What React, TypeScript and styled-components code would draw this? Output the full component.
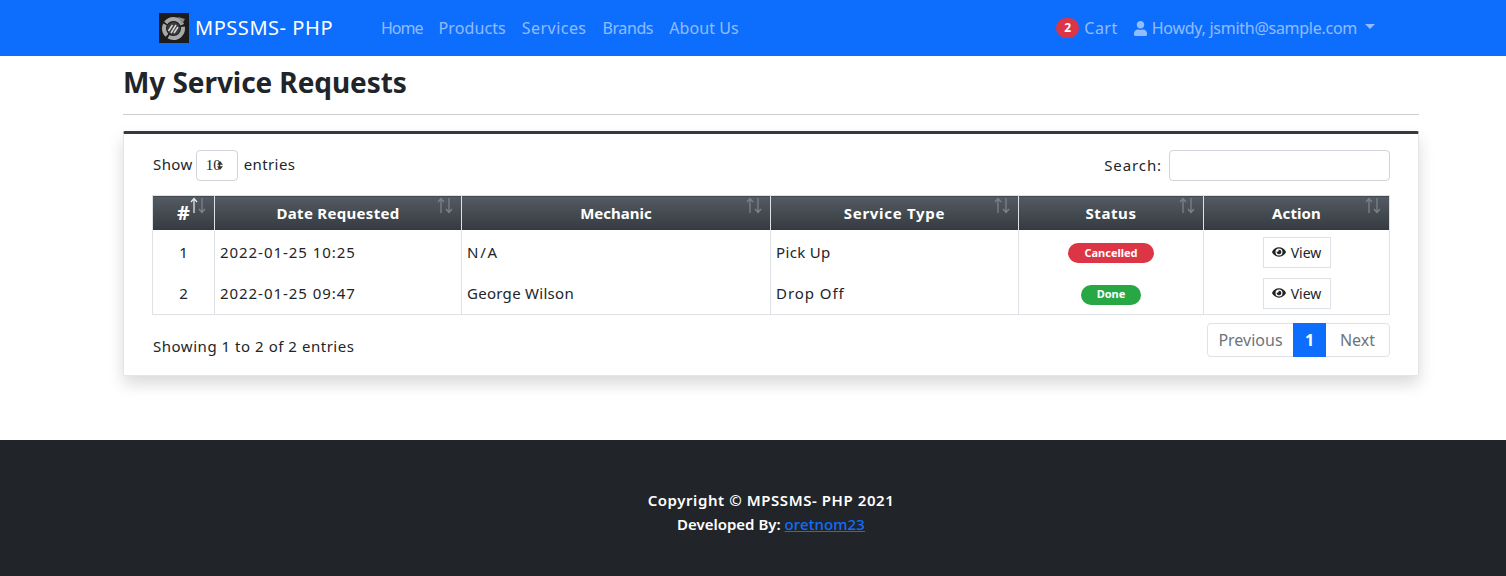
import React from "react";
import styled, { createGlobalStyle } from "styled-components";
import { FaUser, FaEye } from "react-icons/fa";

const Global = createGlobalStyle`
  html, body { margin: 0; padding: 0; background: #fff; }
  body { font-family: "Noto Sans", "Open Sans", sans-serif; font-size: 16px; color: #212529; line-height: 1.5; }
  * { box-sizing: border-box; }
`;

const Page = styled.div`
  width: 1506px;
  height: 576px;
  display: flex;
  flex-direction: column;
  overflow: hidden;
`;
const Navbar = styled.nav`
  height: 56px;
  flex: none;
  background: #0d6efd;
  padding: 0 131px 0 159px;
  display: flex;
  align-items: center;
`;
const Brand = styled.div`
  display: flex;
  align-items: center;
  gap: 6px;
  width: 222px;
  color: #fff;
  font-size: 20px;
  letter-spacing: 0.55px;
`;
const NavLinks = styled.div`
  display: flex;
  gap: 16px;
  flex: 1;
`;
const NavLink = styled.span<{ $ls: number }>`
  color: rgba(255, 255, 255, 0.55);
  font-size: 16px;
  letter-spacing: ${(p) => p.$ls}px;
`;
const NavRight = styled.div`
  display: flex;
  align-items: center;
  color: rgba(255, 255, 255, 0.55);
`;
const CartBadge = styled.span`
  width: 23px;
  height: 20px;
  border-radius: 10px;
  background: #dc3545;
  color: #fff;
  font-size: 12px;
  font-weight: 700;
  display: flex;
  align-items: center;
  justify-content: center;
  margin-right: 5px;
`;
const CartLabel = styled.span`
  margin-right: 15px;
  letter-spacing: 0.5px;
`;
const UserName = styled.span`
  margin-left: 4px;
  letter-spacing: -0.27px;
`;
const Caret = styled.span`
  width: 0;
  height: 0;
  margin-left: 8px;
  margin-bottom: 3px;
  border-top: 5px solid currentColor;
  border-left: 5px solid transparent;
  border-right: 5px solid transparent;
`;
const Main = styled.main`
  flex: 1;
  padding: 0 87px 0 123px;
`;
const Title = styled.h3`
  margin: 0;
  height: 58px;
  font-size: 28px;
  font-weight: 700;
  line-height: 52px;
  letter-spacing: -0.07px;
  color: #212529;
`;
const Rule = styled.hr`
  margin: 0 0 16px;
  border: 0;
  border-top: 1px solid #ccc;
`;
const Card = styled.section`
  height: 245px;
  background: #fff;
  border: 1px solid rgba(0, 0, 0, 0.1);
  border-top: 3px solid #343a40;
  border-radius: 2px;
  box-shadow: 0 8px 16px rgba(0, 0, 0, 0.15);
  padding: 16px 28px 0 28px;
`;
const TopRow = styled.div`
  display: flex;
  justify-content: space-between;
  align-items: center;
  height: 31px;
  font-size: 15px;
  letter-spacing: 0.4px;
`;
const LengthGroup = styled.div`
  display: flex;
  align-items: center;
  gap: 3px;
  padding-left: 1px;
  margin-top: -2px;
`;
const LengthBox = styled.div`
  position: relative;
  width: 42px;
  height: 31px;
  margin: 2px 3px 0 0;
  border: 1px solid #ced4da;
  border-radius: 4px;
  font-family: "Liberation Serif", serif;
  font-size: 15px;
  line-height: 29px;
  padding-left: 9px;
  letter-spacing: 0;
`;
const LengthArrows = styled.svg`
  position: absolute;
  left: 20px;
  top: 10px;
`;
const SearchGroup = styled.div`
  display: flex;
  align-items: center;
  gap: 7px;
  letter-spacing: 0.9px;
`;
const SearchInput = styled.div`
  width: 221px;
  height: 31px;
  border: 1px solid #ced4da;
  border-radius: 4px;
`;
const Table = styled.table`
  margin: 14px 0 0;
  width: 1237px;
  table-layout: fixed;
  border-collapse: collapse;
  font-size: 15px;
  border: 1px solid #dee2e6;
`;
const Th = styled.th<{ $w: number; $ls: number; $size: number }>`
  position: relative;
  width: ${(p) => p.$w}px;
  height: 34px;
  padding: 0;
  text-align: center;
  color: #fff;
  font-weight: 700;
  font-size: ${(p) => p.$size}px;
  letter-spacing: ${(p) => p.$ls}px;
  border-left: 1px solid #dee2e6;
  border-top: 1px solid #dee2e6;
  background: linear-gradient(#545b62, #343a40);
`;
const SortIcons = styled.svg`
  position: absolute;
  right: 8px;
  top: 1px;
`;
const Row = styled.tr`
  &:first-child td {
    height: 43px;
    padding-top: 2px;
  }
`;
const Td = styled.td<{ $center?: boolean; $ls?: number }>`
  height: 42px;
  padding: 0 5px;
  text-align: ${(p) => (p.$center ? "center" : "left")};
  vertical-align: middle;
  border-left: 1px solid #dee2e6;
  white-space: nowrap;
  letter-spacing: ${(p) => p.$ls ?? 0}px;
`;
const Status = styled.span<{ $bg: string; $w: number }>`
  display: inline-flex;
  align-items: center;
  justify-content: center;
  width: ${(p) => p.$w}px;
  height: 20px;
  border-radius: 10px;
  color: #fff;
  font-size: 11px;
  font-weight: 700;
  vertical-align: middle;
  background: ${(p) => p.$bg};
`;
const ViewButton = styled.span`
  display: inline-flex;
  align-items: center;
  justify-content: center;
  gap: 5px;
  width: 68px;
  height: 31px;
  border: 1px solid #dee2e6;
  font-size: 14px;
  vertical-align: middle;
`;
const BottomRow = styled.div`
  display: flex;
  justify-content: space-between;
  margin-top: 8px;
  font-size: 15px;
  letter-spacing: 0.53px;
`;
const Info = styled.div`
  padding: 12px 0 0 1px;
`;
const Pager = styled.div`
  display: flex;
  height: 34px;
  border: 1px solid #dee2e6;
  border-radius: 4px;
  color: #6c757d;
  font-size: 16px;
  letter-spacing: 0;
`;
const PageItem = styled.span<{ $w: number; $on?: boolean }>`
  width: ${(p) => p.$w}px;
  display: flex;
  align-items: center;
  justify-content: center;
  margin: ${(p) => (p.$on ? "-1px 0" : "0")};
  background: ${(p) => (p.$on ? "#0d6efd" : "transparent")};
  color: ${(p) => (p.$on ? "#fff" : "#6c757d")};
  font-weight: ${(p) => (p.$on ? 700 : 400)};
`;
const Footer = styled.footer`
  flex: none;
  height: 136px;
  background: #212529;
  color: #fff;
  padding: 48px 0 0 36px;
  text-align: center;
  font-weight: 600;
  font-size: 15px;
  line-height: 24px;
`;
const CopyLine = styled.div`
  letter-spacing: 0.57px;
`;
const FooterLink = styled.a`
  color: #0d6efd;
  text-decoration: underline;
  font-weight: 500;
  letter-spacing: 0.1px;
`;

const Logo = () => (
  <svg width="30" height="30" viewBox="0 0 30 30" aria-label="logo">
    <rect width="30" height="30" fill="#1c1c1c" />
    <circle cx="14.5" cy="15.5" r="9.5" fill="none" stroke="#a8a8a8" strokeWidth="4" strokeDasharray="20 2 12 1.5" />
    <circle cx="14.5" cy="15.5" r="6.5" fill="#3d3d3d" />
    <path d="M9.5 18l4-6M12 20l5-8M15 20l4-6" stroke="#d8d8d8" strokeWidth="1.5" />
    <path d="M19 4l7 2-3 5z" fill="#8a8a8a" />
  </svg>
);

const Sort = ({ on }: { on?: boolean }) => (
  <SortIcons width="16" height="17" viewBox="0 0 16 17" fill="none" strokeWidth="1.3">
    <path d="M4 16V2M1 5l3-3.5L7 5" stroke={on ? "#e6e6e6" : "#7c8288"} />
    <path d="M12 1v14M9 12l3 3.5 3-3.5" stroke="#7c8288" />
  </SortIcons>
);

const columns = [
  { label: "#", w: 62, on: true, ls: 0, size: 20 },
  { label: "Date Requested", w: 247, ls: 0.3, size: 15 },
  { label: "Mechanic", w: 309, ls: 0, size: 15 },
  { label: "Service Type", w: 248, ls: 0.7, size: 15 },
  { label: "Status", w: 185, ls: 0.6, size: 15 },
  { label: "Action", w: 186, ls: 0.1, size: 15 },
];

const links = [
  { label: "Home", ls: -1 },
  { label: "Products", ls: 0.1 },
  { label: "Services", ls: 0.45 },
  { label: "Brands", ls: -0.4 },
  { label: "About Us", ls: 0.1 },
];

const rows = [
  { n: 1, date: "2022-01-25 10:25", mech: "N/A", mechLs: 1.8, type: "Pick Up", typeLs: 0.35, status: "Cancelled", bg: "#dc3545", w: 86 },
  { n: 2, date: "2022-01-25 09:47", mech: "George Wilson", mechLs: 0.28, type: "Drop Off", typeLs: 0.95, status: "Done", bg: "#28a745", w: 60 },
];

export default function App() {
  return (
    <Page>
      <Global />
      <Navbar>
        <Brand>
          <Logo />
          MPSSMS- PHP
        </Brand>
        <NavLinks>
          {links.map((l) => (
            <NavLink key={l.label} $ls={l.ls}>{l.label}</NavLink>
          ))}
        </NavLinks>
        <NavRight>
          <CartBadge>2</CartBadge>
          <CartLabel>Cart</CartLabel>
          <FaUser size={15} />
          <UserName>Howdy, jsmith@sample.com</UserName>
          <Caret />
        </NavRight>
      </Navbar>
      <Main>
        <Title>My Service Requests</Title>
        <Rule />
        <Card>
          <TopRow>
            <LengthGroup>
              Show
              <LengthBox>
                10
                <LengthArrows width="6" height="9" viewBox="0 0 6 9">
                  <path d="M3 0l3 3.8H0zM3 9L0 5.2h6z" fill="#333" />
                </LengthArrows>
              </LengthBox>
              entries
            </LengthGroup>
            <SearchGroup>
              Search:
              <SearchInput />
            </SearchGroup>
          </TopRow>
          <Table>
            <thead>
              <tr>
                {columns.map((c) => (
                  <Th key={c.label} $w={c.w} $ls={c.ls} $size={c.size}>
                    {c.label}
                    <Sort on={c.on} />
                  </Th>
                ))}
              </tr>
            </thead>
            <tbody>
              {rows.map((r) => (
                <Row key={r.n}>
                  <Td $center>{r.n}</Td>
                  <Td $ls={0.95}>{r.date}</Td>
                  <Td $ls={r.mechLs}>{r.mech}</Td>
                  <Td $ls={r.typeLs}>{r.type}</Td>
                  <Td $center>
                    <Status $bg={r.bg} $w={r.w}>{r.status}</Status>
                  </Td>
                  <Td $center>
                    <ViewButton>
                      <FaEye size={14} />
                      View
                    </ViewButton>
                  </Td>
                </Row>
              ))}
            </tbody>
          </Table>
          <BottomRow>
            <Info>Showing 1 to 2 of 2 entries</Info>
            <Pager>
              <PageItem $w={85}>Previous</PageItem>
              <PageItem $w={33} $on>1</PageItem>
              <PageItem $w={63}>Next</PageItem>
            </Pager>
          </BottomRow>
        </Card>
      </Main>
      <Footer>
        <CopyLine>Copyright © MPSSMS- PHP 2021</CopyLine>
        <div>
          Developed By: <FooterLink>oretnom23</FooterLink>
        </div>
      </Footer>
    </Page>
  );
}
